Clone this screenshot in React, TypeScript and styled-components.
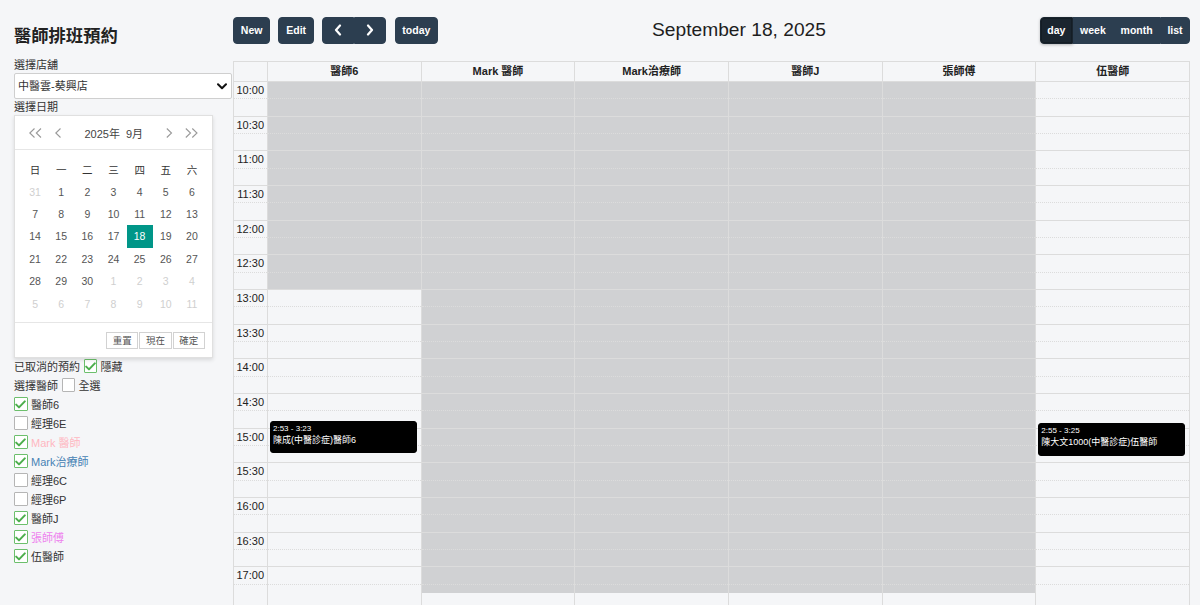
import React from 'react';
import styled, { createGlobalStyle } from 'styled-components';

const GlobalStyle = createGlobalStyle`
  html, body { margin: 0; padding: 0; height: 100%; overflow: hidden; background: #f5f6f8; }
  body { font-family: "Liberation Sans", Arial, "Noto Sans CJK TC", sans-serif; color: #333; }
  #root { height: 100%; }
  * { box-sizing: border-box; }
`;

const SLOT = 52 / 3;
const DAY_START = 600;
const toPx = (min: number) => ((min - DAY_START) / 15) * SLOT;

const Page = styled.div`
  display: flex;
  height: 100vh;
  overflow: hidden;
`;

const Sidebar = styled.aside`
  width: 233px;
  flex-shrink: 0;
  padding: 25px 1px 0 14px;
  display: flex;
  flex-direction: column;
`;

const Title = styled.h1`
  margin: 0 0 10px;
  font-size: 17.3px;
  line-height: 22px;
  font-weight: 700;
  color: #222;
`;

const FieldLabel = styled.div`
  font-size: 11px;
  line-height: 16px;
  color: #333;
`;

const SelectWrap = styled.div`
  position: relative;
  height: 26px;
`;

const Select = styled.select`
  appearance: none;
  -webkit-appearance: none;
  width: 100%;
  height: 26px;
  border: 1px solid #cfcfcf;
  border-radius: 2px;
  background: #fff;
  font-family: inherit;
  font-size: 11px;
  color: #333;
  padding: 0 20px 0 3px;
  outline: none;
`;

const SelectChevron = styled.svg`
  position: absolute;
  right: 5px;
  top: 10px;
  pointer-events: none;
`;

const DatePanel = styled.div`
  position: relative;
  z-index: 1;
  width: 199px;
  background: #fff;
  border: 1px solid #e0e0e0;
  box-shadow: 0 2px 4px rgba(0, 0, 0, 0.12);
`;

const PanelHeader = styled.div`
  height: 34px;
  border-bottom: 1px solid #e6e6e6;
  display: flex;
  align-items: center;
  padding: 0 13.5px 0 14px;
`;

const NavIcon = styled.svg<{ $gap?: number }>`
  flex-shrink: 0;
  margin-left: ${(p) => p.$gap ?? 0}px;
`;

const MonthLabel = styled.div`
  flex: 1;
  text-align: center;
  font-size: 11px;
  color: #444;
  word-spacing: 3px;
`;

const DayGrid = styled.div`
  display: grid;
  grid-template-columns: repeat(7, 1fr);
  grid-auto-rows: 22.4px;
  padding: 8px 7px 7.5px;
`;

const DayCell = styled.div<{ $muted?: boolean; $active?: boolean; $head?: boolean }>`
  display: flex;
  align-items: center;
  justify-content: center;
  font-size: 10.5px;
  color: ${(p) => (p.$active ? '#fff' : p.$muted ? '#cfcfcf' : p.$head ? '#333' : '#555')};
  background: ${(p) => (p.$active ? '#009688' : 'transparent')};
`;

const PanelFooter = styled.div`
  border-top: 1px solid #e6e6e6;
  display: flex;
  justify-content: flex-end;
  gap: 1px;
  padding: 8.5px 7px 8px;
`;

const FooterButton = styled.button`
  width: 32.3px;
  height: 17.5px;
  padding: 0;
  border: 1px solid #d2d2d2;
  background: #fff;
  font-family: inherit;
  font-size: 9.5px;
  color: #555;
  line-height: 15px;
`;

const CheckList = styled.div`
  margin-top: -1.5px;
  display: flex;
  flex-direction: column;
`;

const CheckRow = styled.div`
  display: flex;
  align-items: center;
  height: 19px;
  gap: 3.5px;
  font-size: 11px;
  color: #333;
`;

const RowText = styled.span<{ $color?: string }>`
  color: ${(p) => p.$color ?? '#333'};
  white-space: nowrap;
`;

const Box = styled.span<{ $checked?: boolean }>`
  width: 13.5px;
  height: 13.5px;
  flex-shrink: 0;
  border: 1px solid ${(p) => (p.$checked ? '#6cbf6c' : '#b5b5b5')};
  border-radius: 1px;
  background: #fff;
  display: flex;
  align-items: center;
  justify-content: center;
`;

const Main = styled.main`
  flex: 1;
  min-width: 0;
  display: flex;
  flex-direction: column;
  padding: 17px 10px 0 0;
`;

const Toolbar = styled.div`
  display: flex;
  justify-content: space-between;
  align-items: center;
  height: 26.5px;
  margin-bottom: 17.5px;
`;

const Chunk = styled.div`
  display: flex;
  align-items: center;
  gap: 8.3px;
`;

const Btn = styled.button<{ $active?: boolean; $w?: number; $pad?: number }>`
  height: 26.5px;
  padding: 0 ${(p) => p.$pad ?? 6.8}px;
  ${(p) => (p.$w ? `width: ${p.$w}px;` : '')}
  background: ${(p) => (p.$active ? '#1a252f' : '#2c3e50')};
  border: 1px solid ${(p) => (p.$active ? '#1a252f' : '#2c3e50')};
  color: #fff;
  font-family: inherit;
  font-size: 10.5px;
  font-weight: 700;
  border-radius: 4px;
  display: flex;
  align-items: center;
  justify-content: center;
  box-shadow: ${(p) => (p.$active ? 'inset 0 0 0 1px rgba(0,0,0,0.2), 0 1px 3px rgba(0,0,0,0.25)' : 'none')};
`;

const BtnGroup = styled.div`
  display: flex;
  & > button { border-radius: 0; }
  & > button:first-child { border-radius: 4px 0 0 4px; }
  & > button:last-child { border-radius: 0 4px 4px 0; }
`;

const ViewTitle = styled.h2`
  margin: 0;
  font-size: 19.2px;
  font-weight: 400;
  color: #1e1e1e;
  line-height: 26px;
`;

const Grid = styled.div`
  flex: 1;
  min-height: 0;
  border: 1px solid #dcdcdc;
  border-bottom: none;
  display: flex;
  flex-direction: column;
  overflow: hidden;
`;

const HeadRow = styled.div`
  display: grid;
  grid-template-columns: 33px repeat(6, 1fr);
  height: 20px;
  border-bottom: 1px solid #dcdcdc;
`;

const HeadCell = styled.div<{ $axis?: boolean }>`
  border-left: ${(p) => (p.$axis ? 'none' : '1px solid #dcdcdc')};
  font-size: 11px;
  font-weight: 700;
  color: #222;
  text-align: center;
  line-height: 19px;
  white-space: nowrap;
`;

const Body = styled.div`
  flex: 1;
  display: grid;
  grid-template-columns: 33px repeat(6, 1fr);
  align-items: start;
  overflow: hidden;
`;

const SlotStack = styled.div`
  position: relative;
  z-index: 1;
  display: flex;
  flex-direction: column;
`;

const Slot = styled.div<{ $line: 'solid' | 'dotted' | 'none' }>`
  height: ${SLOT}px;
  flex-shrink: 0;
  border-bottom: 1px ${(p) => (p.$line === 'none' ? 'solid transparent' : `${p.$line} #dcdcdc`)};
  font-size: 11px;
  line-height: ${SLOT}px;
  text-align: right;
  padding-right: 3px;
  color: #222;
`;

const DayCol = styled.div`
  position: relative;
  border-left: 1px solid #dcdcdc;
`;

const Band = styled.div`
  position: absolute;
  left: 0;
  right: 0;
  z-index: 0;
  background: #d0d1d3;
`;

const Event = styled.div`
  position: absolute;
  left: 2px;
  right: 4px;
  z-index: 2;
  background: #000;
  border: 1px solid #000;
  border-radius: 3px;
  color: #fff;
  padding: 0 2px;
  overflow: hidden;
`;

const EventTime = styled.div`
  font-size: 8px;
  line-height: 11px;
  padding-top: 1px;
  white-space: nowrap;
`;

const EventTitle = styled.div`
  font-size: 9px;
  line-height: 12px;
  white-space: nowrap;
`;

const Check = () => (
  <svg width="11" height="9" viewBox="0 0 11 9">
    <polyline points="1.2,4.6 4,7.4 9.8,1.4" fill="none" stroke="#4cae4c" strokeWidth="2" strokeLinecap="round" strokeLinejoin="round" />
  </svg>
);

const Checkbox = ({ checked }: { checked?: boolean }) => <Box $checked={checked}>{checked && <Check />}</Box>;

const Chev = ({ dir, double, gap }: { dir: 'l' | 'r'; double?: boolean; gap?: number }) => {
  const w = double ? 14 : 7;
  const one = (x: number) =>
    dir === 'l' ? `${x + 5.5},0.5 ${x + 0.8},5 ${x + 5.5},9.5` : `${x + 0.8},0.5 ${x + 5.5},5 ${x + 0.8},9.5`;
  return (
    <NavIcon $gap={gap} width={w} height="10" viewBox={`0 0 ${w} 10`}>
      <polyline points={one(0)} fill="none" stroke="#9a9a9a" strokeWidth="1.1" />
      {double && <polyline points={one(6.5)} fill="none" stroke="#9a9a9a" strokeWidth="1.1" />}
    </NavIcon>
  );
};

const ArrowIcon = ({ dir }: { dir: 'l' | 'r' }) => (
  <svg width="8" height="12" viewBox="0 0 8 12">
    <polyline
      points={dir === 'l' ? '6,1.5 2,6 6,10.5' : '2,1.5 6,6 2,10.5'}
      fill="none"
      stroke="#fff"
      strokeWidth="2.2"
      strokeLinecap="round"
      strokeLinejoin="round"
    />
  </svg>
);

const weekdays = ['日', '一', '二', '三', '四', '五', '六'];
const days: { d: number; muted?: boolean }[] = [
  { d: 31, muted: true },
  ...Array.from({ length: 30 }, (_, i) => ({ d: i + 1 })),
  ...Array.from({ length: 11 }, (_, i) => ({ d: i + 1, muted: true })),
];

const doctors: { name: string; checked: boolean; color?: string }[] = [
  { name: '醫師6', checked: true },
  { name: '經理6E', checked: false },
  { name: 'Mark 醫師', checked: true, color: '#ffb6c1' },
  { name: 'Mark治療師', checked: true, color: '#4682b4' },
  { name: '經理6C', checked: false },
  { name: '經理6P', checked: false },
  { name: '醫師J', checked: true },
  { name: '張師傅', checked: true, color: '#ee82ee' },
  { name: '伍醫師', checked: true },
];

type Col = {
  name: string;
  bands: [number, number][];
  events: { start: number; end: number; time: string; title: string }[];
};

const columns: Col[] = [
  {
    name: '醫師6',
    bands: [[600, 780]],
    events: [{ start: 893, end: 923, time: '2:53 - 3:23', title: '陳成(中醫診症)醫師6' }],
  },
  { name: 'Mark 醫師', bands: [[600, 1042]], events: [] },
  { name: 'Mark治療師', bands: [[600, 1042]], events: [] },
  { name: '醫師J', bands: [[600, 1042]], events: [] },
  { name: '張師傅', bands: [[600, 1042]], events: [] },
  {
    name: '伍醫師',
    bands: [],
    events: [{ start: 895, end: 925, time: '2:55 - 3:25', title: '陳大文1000(中醫診症)伍醫師' }],
  },
];

const SLOT_COUNT = 31;
const slots = Array.from({ length: SLOT_COUNT }, (_, i) => i);
const slotLabel = (i: number) => {
  if (i % 2 !== 0 || i >= 30) return '';
  const m = DAY_START + i * 15;
  return `${Math.floor(m / 60)}:${String(m % 60).padStart(2, '0')}`;
};
const lineOf = (i: number): 'solid' | 'dotted' | 'none' =>
  i >= 29 ? 'none' : i % 2 === 1 ? 'solid' : 'dotted';

export default function App() {
  return (
    <>
      <GlobalStyle />
      <Page>
        <Sidebar>
          <Title>醫師排班預約</Title>
          <FieldLabel>選擇店舖</FieldLabel>
          <SelectWrap>
            <Select defaultValue="kx">
              <option value="kx">中醫雲-葵興店</option>
            </Select>
            <SelectChevron width="10" height="7" viewBox="0 0 10 7">
              <polyline points="1,1.2 5,5.2 9,1.2" fill="none" stroke="#111" strokeWidth="2" strokeLinecap="round" strokeLinejoin="round" />
            </SelectChevron>
          </SelectWrap>
          <FieldLabel>選擇日期</FieldLabel>
          <DatePanel>
            <PanelHeader>
              <Chev dir="l" double />
              <Chev dir="l" gap={12} />
              <MonthLabel>2025年 9月</MonthLabel>
              <Chev dir="r" />
              <Chev dir="r" double gap={12} />
            </PanelHeader>
            <DayGrid>
              {weekdays.map((w) => (
                <DayCell key={w} $head>
                  {w}
                </DayCell>
              ))}
              {days.map((d, i) => (
                <DayCell key={i} $muted={d.muted} $active={!d.muted && d.d === 18}>
                  {d.d}
                </DayCell>
              ))}
            </DayGrid>
            <PanelFooter>
              <FooterButton>重置</FooterButton>
              <FooterButton>現在</FooterButton>
              <FooterButton>確定</FooterButton>
            </PanelFooter>
          </DatePanel>
          <CheckList>
            <CheckRow>
              <RowText>已取消的預約</RowText>
              <Checkbox checked />
              <RowText>隱藏</RowText>
            </CheckRow>
            <CheckRow>
              <RowText>選擇醫師</RowText>
              <Checkbox />
              <RowText>全選</RowText>
            </CheckRow>
            {doctors.map((d) => (
              <CheckRow key={d.name}>
                <Checkbox checked={d.checked} />
                <RowText $color={d.color}>{d.name}</RowText>
              </CheckRow>
            ))}
          </CheckList>
        </Sidebar>
        <Main>
          <Toolbar>
            <Chunk>
              <Btn>New</Btn>
              <Btn>Edit</Btn>
              <BtnGroup>
                <Btn $w={32}>
                  <ArrowIcon dir="l" />
                </Btn>
                <Btn $w={32}>
                  <ArrowIcon dir="r" />
                </Btn>
              </BtnGroup>
              <Btn>today</Btn>
            </Chunk>
            <ViewTitle>September 18, 2025</ViewTitle>
            <Chunk>
              <BtnGroup>
                <Btn $active $pad={6.4}>day</Btn>
                <Btn $pad={6.4}>week</Btn>
                <Btn $pad={6.4}>month</Btn>
                <Btn $pad={6.4}>list</Btn>
              </BtnGroup>
            </Chunk>
          </Toolbar>
          <Grid>
            <HeadRow>
              <HeadCell $axis />
              {columns.map((c) => (
                <HeadCell key={c.name}>{c.name}</HeadCell>
              ))}
            </HeadRow>
            <Body>
              <SlotStack>
                {slots.map((i) => (
                  <Slot key={i} $line={lineOf(i)}>
                    {slotLabel(i)}
                  </Slot>
                ))}
              </SlotStack>
              {columns.map((c) => (
                <DayCol key={c.name}>
                  {c.bands.map(([s, e], k) => (
                    <Band key={k} style={{ top: toPx(s), height: toPx(e) - toPx(s) }} />
                  ))}
                  <SlotStack>
                    {slots.map((i) => (
                      <Slot key={i} $line={lineOf(i)} />
                    ))}
                  </SlotStack>
                  {c.events.map((ev) => (
                    <Event key={ev.title} style={{ top: toPx(ev.start), height: toPx(ev.end) - toPx(ev.start) - 2 }}>
                      <EventTime>{ev.time}</EventTime>
                      <EventTitle>{ev.title}</EventTitle>
                    </Event>
                  ))}
                </DayCol>
              ))}
            </Body>
          </Grid>
        </Main>
      </Page>
    </>
  );
}
